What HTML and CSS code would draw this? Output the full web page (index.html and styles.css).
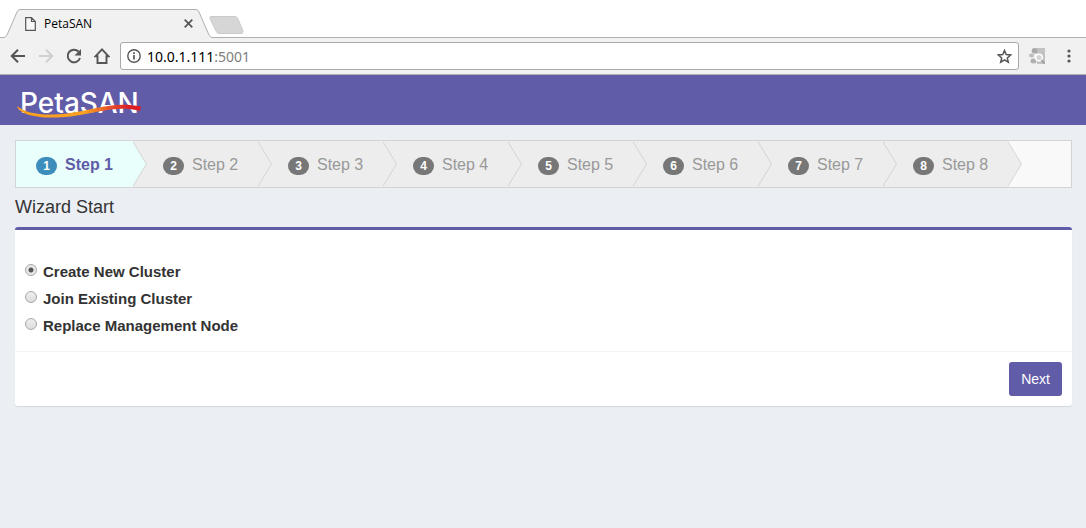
FILE: index.html
```html
<!DOCTYPE html>
<html lang="en">
  <head>
    <meta charset="UTF-8" />
    <meta name="viewport" content="width=device-width, initial-scale=1.0" />
    <title>PetaSAN</title>
    <link rel="stylesheet" href="styles.css">
  </head>
  <body>
    <!-- browser tabs -->
    <div class="tabs">
      <div class="tab">
        <svg class="tab-shape" width="216" height="29" viewBox="0 0 216 29">
          <path d="M0 28.5H4Q6 28 7 26L17 3Q18 .5 20 .5H196Q198 .5 199 3L209 26Q210 28 212 28.5H216" fill="#f1f1f1" stroke="#b0b0b0" />
          <path d="M5 28.5H211" stroke="#f1f1f1" />
        </svg>
        <svg class="tab-icon" width="11" height="14" viewBox="0 0 11 14">
          <path d="M.7.7H6.5L10.3 4.5V13.3H.7ZM6.5.7V4.5H10.3" fill="#f8f8f8" stroke="#555" stroke-width="1.2" />
        </svg>
        <span class="tab-title">PetaSAN</span>
        <button class="tab-close" aria-label="Close tab">
          <svg width="9" height="9" viewBox="0 0 9 9"><path d="M.7.7 8.3 8.3M8.3.7.7 8.3" stroke="#555" stroke-width="1.7" /></svg>
        </button>
      </div>
      <button class="new-tab" aria-label="New tab">
        <svg width="35" height="18" viewBox="0 0 35 18"><path d="M2 .5H26Q28 .5 29 3L34 15Q34.500 17.500 32 17.500H10Q8 17.500 7 15L1 2.500Q.5.5 2 .5Z" fill="#d6d6d6" stroke="#cacaca" /></svg>
      </button>
    </div>

    <!-- address bar -->
    <div class="toolbar">
      <button class="tool" aria-label="Back">
        <svg width="16" height="16" viewBox="0 0 16 16"><path d="M15 8H2M8 1.700 1.700 8 8 14.300" fill="none" stroke="#555" stroke-width="2" /></svg>
      </button>
      <button class="tool" aria-label="Forward" disabled>
        <svg width="16" height="16" viewBox="0 0 16 16"><path d="M1 8H14M8 1.700 14.300 8 8 14.300" fill="none" stroke="#d0d0d0" stroke-width="2" /></svg>
      </button>
      <button class="tool" aria-label="Reload">
        <svg width="16" height="16" viewBox="0 0 16 16"><path d="M14 10A6.300 6.300 0 1 1 12.500 3.500" fill="none" stroke="#555" stroke-width="2" /><path d="M15 1V7.500H8.500Z" fill="#555" /></svg>
      </button>
      <button class="tool" aria-label="Home">
        <svg width="16" height="16" viewBox="0 0 16 16"><path d="M8 1.400 1.400 8.300H3.500V15H12.500V8.300H14.600Z" fill="none" stroke="#555" stroke-width="1.900" /></svg>
      </button>
      <div class="address">
        <svg width="14" height="14" viewBox="0 0 14 14"><circle cx="7" cy="7" r="6.200" fill="none" stroke="#555" stroke-width="1.400" /><path d="M7 6V10.500M7 3.300V5" stroke="#555" stroke-width="1.700" /></svg>
        <span class="url">10.0.1.111<span class="port">:5001</span></span>
        <button class="star" aria-label="Bookmark this page">
          <svg width="15" height="15" viewBox="0 0 15 15"><path d="M7.500 1.500 9.200 5.600 13.600 6 10.300 8.900 11.300 13.200 7.500 10.900 3.700 13.200 4.700 8.900 1.400 6 5.800 5.600Z" fill="none" stroke="#555" stroke-width="1.500" /></svg>
        </button>
      </div>
      <button class="tool ext" aria-label="Extension">
        <svg width="16" height="16" viewBox="0 0 16 16">
          <path d="M7 0H16V16H8Z" fill="#c2c2c2" />
          <circle cx="5.500" cy="2.800" r="2.800" fill="#a8a8a8" />
          <ellipse cx="2.500" cy="7.500" rx="2.500" ry="2" fill="#bdbdbd" />
          <ellipse cx="4.500" cy="13" rx="3" ry="2.500" fill="#b0b0b0" />
          <circle cx="10" cy="9.500" r="3.300" fill="#d4d4d4" stroke="#fff" stroke-width="1.500" />
          <path d="m12.500 12 3 3.500" stroke="#999" stroke-width="1.500" />
        </svg>
      </button>
      <button class="tool" aria-label="Menu">
        <svg width="16" height="16" viewBox="0 0 16 16"><g fill="#555"><circle cx="8" cy="3" r="1.600" /><circle cx="8" cy="8" r="1.600" /><circle cx="8" cy="13" r="1.600" /></g></svg>
      </button>
    </div>

    <header class="header">
      <a class="logo" href="#">PetaSAN
        <svg class="swoosh" width="125" height="16" viewBox="0 0 125 16">
          <defs>
            <linearGradient id="flame">
              <stop offset="0.550" stop-color="#f9a01f" />
              <stop offset="0.750" stop-color="#e8502a" />
              <stop offset="0.900" stop-color="#dc1f26" />
            </linearGradient>
          </defs>
          <path d="M0 3C9 11 27 13 50 10.500C78 7 96-2 124 3.500L123 8C99 2 82 10 54 13.500C24 17 2 12 0 3Z" fill="url(#flame)" />
        </svg>
      </a>
    </header>

    <main class="content">
      <ol class="steps">
        <li class="step active"><span class="badge">1</span>Step 1</li>
        <li class="step"><span class="badge">2</span>Step 2</li>
        <li class="step"><span class="badge">3</span>Step 3</li>
        <li class="step"><span class="badge">4</span>Step 4</li>
        <li class="step"><span class="badge">5</span>Step 5</li>
        <li class="step"><span class="badge">6</span>Step 6</li>
        <li class="step"><span class="badge">7</span>Step 7</li>
        <li class="step"><span class="badge">8</span>Step 8</li>
      </ol>
      <h1 class="title">Wizard Start</h1>
      <form class="box">
        <div class="box-body">
          <div class="option">
            <input type="radio" name="cluster" id="create" checked>
            <label for="create">Create New Cluster</label>
          </div>
          <div class="option">
            <input type="radio" name="cluster" id="join">
            <label for="join">Join Existing Cluster</label>
          </div>
          <div class="option">
            <input type="radio" name="cluster" id="replace">
            <label for="replace">Replace Management Node</label>
          </div>
        </div>
        <div class="box-footer">
          <button class="btn" type="button">Next</button>
        </div>
      </form>
    </main>
  </body>
</html>
```
FILE: styles.css
```css
* {
  box-sizing: border-box;
}
body {
  margin: 0;
  background: #ebeff4;
  color: #333;
  font-family: "Liberation Sans", Arial, sans-serif;
  font-size: 14px;
}
button {
  padding: 0;
  border: 0;
  background: none;
  font-family: inherit;
}
svg {
  display: block;
}

/* browser */
.tabs {
  display: flex;
  align-items: flex-end;
  height: 38px;
  background: linear-gradient(#b0b0b0, #b0b0b0) bottom / 100% 1px no-repeat #fff;
}
.tab {
  position: relative;
  display: flex;
  align-items: center;
  width: 209px;
  height: 29px;
  padding: 0 16px 0 25px;
  font: 12px "Open Sans", sans-serif;
  color: #000;
}
.tab-shape {
  position: absolute;
  left: 0;
  top: 0;
}
.tab-icon,
.tab-title,
.tab-close {
  position: relative;
}
.tab-title {
  flex: 1;
  margin-left: 8px;
}
.new-tab {
  margin-bottom: 4px;
}
.toolbar {
  display: flex;
  align-items: center;
  gap: 12px;
  height: 37px;
  padding: 0 9px 0 10px;
  background: #f1f1f1;
  border-bottom: 1px solid #b0b0b0;
}
.address {
  flex: 1;
  display: flex;
  align-items: center;
  height: 28px;
  margin: 0 -2px;
  padding: 0 6px;
  background: #fff;
  border: 1px solid #a8a8a8;
  border-radius: 3px;
}
.url {
  flex: 1;
  margin-left: 6px;
  color: #000;
  font: 14px "Noto Sans", sans-serif;
}
.port {
  color: #808080;
}
.ext {
  margin-right: 4px;
}

/* page header */
.header {
  display: flex;
  height: 50px;
  padding: 0 17px;
  background: #605ca8;
}
.logo {
  position: relative;
  padding-left: 3px;
  color: #fff;
  font: 500 28px/56px Inter, sans-serif;
  text-decoration: none;
}
.swoosh {
  position: absolute;
  left: 0;
  top: 28px;
}

.content {
  padding: 15px 14px 15px 15px;
}

/* steps */
.steps {
  display: flex;
  height: 48px;
  margin: 0;
  padding: 0;
  overflow: hidden;
  list-style: none;
  background: #f9f9f9;
  border: 1px solid #d4d4d4;
}
.step {
  position: relative;
  display: flex;
  align-items: center;
  gap: 8px;
  flex: none;
  width: 125px;
  padding-left: 30px;
  background: #ededed;
  color: #999;
  font-size: 16px;
  line-height: 20px;
  padding-top: 1px;
}
.step::before,
.step::after {
  content: "";
  position: absolute;
  z-index: 1;
  top: 0;
  left: 100%;
  border: 23px solid transparent;
  border-left: 14px solid #d4d4d4;
  border-right: 0;
}
.step::after {
  margin-left: -1px;
  border-left-color: #ededed;
}
.step.active {
  width: 117px;
  padding-left: 20px;
  background: #e8fffc;
  color: #605ca8;
  font-weight: bold;
}
.step.active::after {
  border-left-color: #e8fffc;
}
.badge {
  width: 21px;
  margin-top: 2px;
  border-radius: 9px;
  background: #777;
  color: #fff;
  font-size: 12px;
  font-weight: bold;
  line-height: 18px;
  text-align: center;
}
.active .badge {
  background: #3c8dbc;
}

.title {
  margin: 0;
  font-size: 18px;
  font-weight: 500;
  line-height: 39px;
}

/* box */
.box {
  background: #fff;
  border-top: 3px solid #605ca8;
  border-radius: 3px;
  box-shadow: 0 1px 1px rgba(0, 0, 0, 0.1);
}
.box-body {
  padding: 28px 10px 12px;
}
.option {
  display: flex;
  align-items: center;
  gap: 6px;
  height: 27px;
}
.option label {
  font-size: 15px;
  font-weight: bold;
}
.option input {
  appearance: none;
  width: 12px;
  height: 12px;
  margin: 0 0 3px;
  border: 1px solid #a8a8a8;
  border-radius: 50%;
  background: linear-gradient(#eee, #ddd);
}
.option input:checked {
  background: radial-gradient(circle, #555 0 2px, #e8e8e8 3px);
}
.box-footer {
  display: flex;
  justify-content: flex-end;
  padding: 10px;
  border-top: 1px solid #f4f4f4;
}
.btn {
  height: 34px;
  padding: 0 12px;
  border-radius: 3px;
  background: #605ca8;
  color: #fff;
  font-size: 14px;
}
```
